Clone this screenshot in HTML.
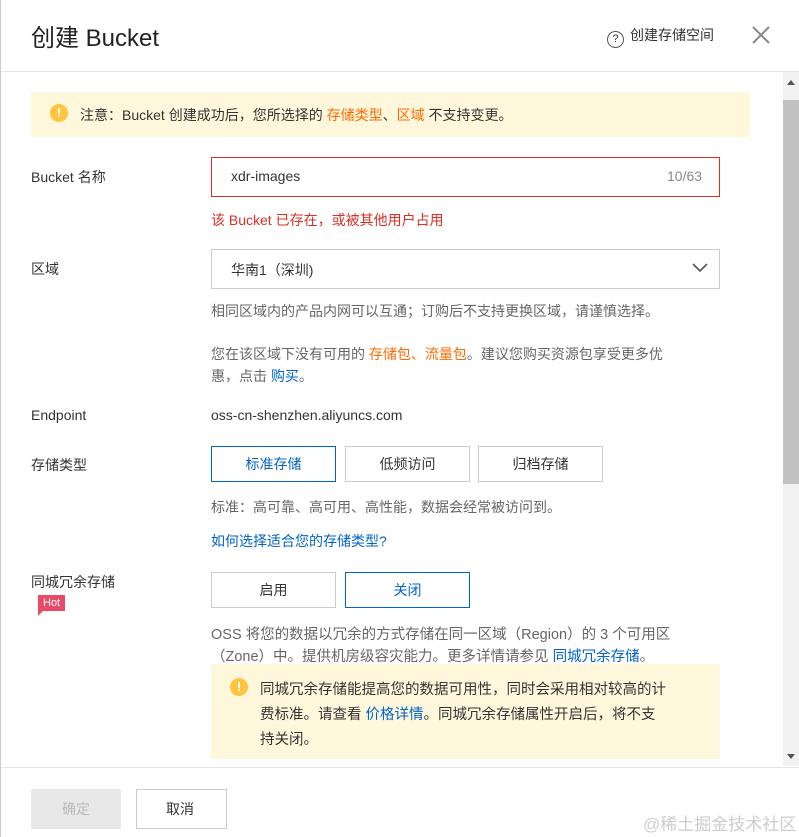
<!DOCTYPE html><html><head><meta charset="utf-8"><style>
body{margin:0;width:799px;height:837px;background:#fff;font-family:"Liberation Sans","Noto Sans CJK SC",sans-serif;font-size:14px;color:#333;position:relative;overflow:hidden}
.a{position:absolute;white-space:nowrap}
.or{color:#ff6a00}.bl{color:#0064c8}.g{color:#666}
.btn{position:absolute;height:36px;border:1px solid #ccc;box-sizing:border-box;text-align:center;line-height:34px;font-size:14px;color:#333;background:#fff}
.sel{border-color:#0064c8;color:#0064c8}
</style></head><body>
<div class="a" style="left:0;top:0;width:1px;height:837px;background:#ccc"></div>
<div class="a" style="left:31px;top:18px;font-size:24px;color:#222">创建 Bucket</div>
<div class="a" style="left:607px;top:25px;font-size:14px;color:#333"><span style="display:inline-block;width:15px;height:15px;border:1px solid #555;border-radius:50%;text-align:center;line-height:15px;font-size:11px;margin-right:6px;vertical-align:-2px">?</span>创建存储空间</div>
<svg class="a" style="left:751px;top:25px" width="20" height="20"><path d="M2 2L18 18M18 2L2 18" stroke="#888" stroke-width="2"/></svg>
<div class="a" style="left:1px;top:71px;width:798px;height:1px;background:#e5e5e5"></div>
<div class="a" style="left:783px;top:72px;width:16px;height:694px;background:#f1f1f1"></div>
<div class="a" style="left:783px;top:100px;width:16px;height:384px;background:#c1c1c1"></div>
<div class="a" style="left:787px;top:80px;border:4px solid transparent;border-bottom:5px solid #555;border-top:0"></div>
<div class="a" style="left:787px;top:754px;border:4px solid transparent;border-top:5px solid #555;border-bottom:0"></div>
<div class="a" style="left:31px;top:92px;width:719px;height:45px;background:#fff7dc"></div>
<div class="a" style="left:50px;top:104px;width:18px;height:18px;border-radius:50%;background:#ffc440;color:#fff;font-weight:bold;text-align:center;line-height:18px;font-size:13px">!</div>
<div class="a" style="left:80px;top:105px">注意：Bucket 创建成功后，您所选择的 <span class="or">存储类型</span>、<span class="or">区域</span> 不支持变更。</div>
<div class="a" style="left:31px;top:167px">Bucket 名称</div>
<div class="a" style="left:211px;top:157px;width:509px;height:40px;border:1px solid #d93026;box-sizing:border-box"></div>
<div class="a" style="left:231px;top:168px">xdr-images</div>
<div class="a g" style="left:667px;top:168px;color:#888">10/63</div>
<div class="a" style="left:211px;top:210px;color:#d93026">该 Bucket 已存在，或被其他用户占用</div>
<div class="a" style="left:31px;top:259px">区域</div>
<div class="a" style="left:211px;top:249px;width:509px;height:40px;border:1px solid #ccc;box-sizing:border-box"></div>
<div class="a" style="left:231px;top:260px">华南1（深圳)</div>
<svg class="a" style="left:692px;top:263px" width="16" height="10"><path d="M1 1L8 8L15 1" stroke="#555" stroke-width="1.6" fill="none"/></svg>
<div class="a g" style="left:211px;top:301px">相同区域内的产品内网可以互通；订购后不支持更换区域，请谨慎选择。</div>
<div class="a g" style="left:211px;top:344px">您在该区域下没有可用的 <span class="or">存储包、流量包</span>。建议您购买资源包享受更多优</div>
<div class="a g" style="left:211px;top:366px">惠，点击 <span class="bl">购买</span>。</div>
<div class="a" style="left:31px;top:407px">Endpoint</div>
<div class="a" style="left:211px;top:407px">oss-cn-shenzhen.aliyuncs.com</div>
<div class="a" style="left:31px;top:455px">存储类型</div>
<div class="btn sel" style="left:211px;top:446px;width:125px">标准存储</div>
<div class="btn" style="left:345px;top:446px;width:125px">低频访问</div>
<div class="btn" style="left:478px;top:446px;width:125px">归档存储</div>
<div class="a g" style="left:211px;top:497px">标准：高可靠、高可用、高性能，数据会经常被访问到。</div>
<div class="a bl" style="left:211px;top:531px">如何选择适合您的存储类型?</div>
<div class="a" style="left:31px;top:572px">同城冗余存储</div>
<div class="a" style="left:38px;top:595px;background:#e84a6a;color:#fff;font-size:11px;padding:0 5px;height:16px;line-height:16px">Hot</div>
<div class="a" style="left:38px;top:611px;border-left:5px solid #e84a6a;border-bottom:5px solid transparent"></div>
<div class="btn" style="left:211px;top:572px;width:125px">启用</div>
<div class="btn sel" style="left:345px;top:572px;width:125px">关闭</div>
<div class="a g" style="left:211px;top:623px;font-size:14.5px">OSS 将您的数据以冗余的方式存储在同一区域（Region）的 3 个可用区</div>
<div class="a g" style="left:211px;top:645px;font-size:14.5px">（Zone）中。提供机房级容灾能力。更多详情请参见 <span class="bl">同城冗余存储</span>。</div>
<div class="a" style="left:211px;top:664px;width:509px;height:95px;background:#fff7dc"></div>
<div class="a" style="left:230px;top:678px;width:18px;height:18px;border-radius:50%;background:#ffc440;color:#fff;font-weight:bold;text-align:center;line-height:18px;font-size:13px">!</div>
<div class="a" style="left:260px;top:678px;line-height:25px;font-size:14.5px">同城冗余存储能提高您的数据可用性，同时会采用相对较高的计<br>费标准。请查看 <span class="bl">价格详情</span>。同城冗余存储属性开启后，将不支<br>持关闭。</div>
<div class="a" style="left:1px;top:767px;width:798px;height:1px;background:#e5e5e5"></div>
<div class="a" style="left:31px;top:789px;width:90px;height:40px;background:#e8e8e8;color:#bbb;text-align:center;line-height:40px">确定</div>
<div class="a" style="left:136px;top:789px;width:91px;height:40px;border:1px solid #ccc;box-sizing:border-box;line-height:38px;padding-left:29px;overflow:hidden">取消</div>
<div class="a" style="left:643px;top:810px;font-size:17px;color:#ccc">@稀土掘金技术社区</div>
</body></html>
